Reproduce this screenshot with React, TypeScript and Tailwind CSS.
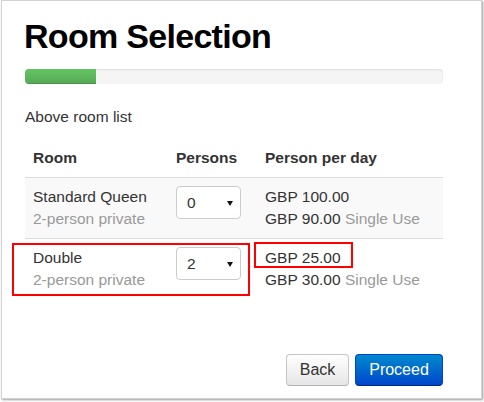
import { useState } from "react";

type Room = {
  name: string;
  kind: string;
  persons: number;
  price: string;
  single: string;
};

const rooms: Room[] = [
  { name: "Standard Queen", kind: "2-person private", persons: 0, price: "GBP 100.00", single: "GBP 90.00" },
  { name: "Double", kind: "2-person private", persons: 2, price: "GBP 25.00", single: "GBP 30.00" },
];

function FakeSelect({ value }: { value: number }) {
  return (
    <div className="w-[65px] h-[33px] border border-[#cccccc] rounded-[4px] bg-white flex items-center justify-between pl-[10px] pr-[7px] text-[15.5px] leading-[22px] text-[#333]">
      <span>{value}</span>
      <svg width="6" height="5" viewBox="0 0 6 5" className="mt-[1px]">
        <path d="M0 0 L6 0 L3 5 Z" fill="#111" />
      </svg>
    </div>
  );
}

export default function App() {
  const [progress] = useState(71);

  return (
    <div className="w-[484px] h-[402px] bg-white relative font-['Liberation_Sans',Arial,sans-serif] text-[#333]">
      <div className="ml-[1px] w-[481px] h-[399px] box-border border border-[#d2d2d2] shadow-[1px_1px_2px_rgba(0,0,0,0.4)] flex flex-col pl-[23px] pr-[38px] pt-[15px]">
        <h1 className="text-[34px] font-bold leading-[40px] tracking-[-0.7px] text-black -ml-[1px]">Room Selection</h1>

        <div className="mt-[13px] h-[15px] rounded-[4px] bg-[#f5f5f5] shadow-[inset_0_1px_2px_rgba(0,0,0,0.1)] overflow-hidden">
          <div
            className="h-full bg-gradient-to-b from-[#62c462] to-[#57a957] shadow-[inset_0_-1px_0_rgba(0,0,0,0.15)]"
            style={{ width: progress }}
          />
        </div>

        <p className="mt-[22px] text-[15.5px] leading-[22px]">Above room list</p>

        <div className="mt-[11px] text-[15.5px] leading-[22px]">
          <div className="grid grid-cols-[143px_89px_186px] border-b border-[#dddddd] font-bold">
            <div className="p-[8px]">Room</div>
            <div className="p-[8px]">Persons</div>
            <div className="p-[8px]">Person per day</div>
          </div>
          {rooms.map((r, i) => (
            <div
              key={r.name}
              className={`grid grid-cols-[143px_89px_186px] ${i === 0 ? "bg-[#f9f9f9] border-b border-[#dddddd]" : ""}`}
            >
              <div className="px-[8px] pt-[8px] pb-[8px]">
                <div>{r.name}</div>
                <div className="text-[#999]">{r.kind}</div>
              </div>
              <div className="px-[8px] pt-[8px]">
                <FakeSelect value={r.persons} />
              </div>
              <div className="px-[8px] pt-[8px]">
                <div>{r.price}</div>
                <div>
                  {r.single} <span className="text-[#999]">Single Use</span>
                </div>
              </div>
            </div>
          ))}
        </div>

        <div className="mt-[55px] flex justify-end gap-[6px]">
          <button className="w-[63px] h-[32px] rounded-[4px] border border-[#c5c5c5] border-b-[#b3b3b3] bg-gradient-to-b from-white to-[#e6e6e6] text-[16px] leading-[22px] text-[#333]">
            Back
          </button>
          <button className="w-[88px] h-[32px] rounded-[4px] border border-[#0044cc] border-b-[#002a80] bg-gradient-to-b from-[#0088cc] to-[#0044cc] text-[16px] leading-[22px] text-white">
            Proceed
          </button>
        </div>
      </div>

      <div className="absolute left-[12px] top-[243px] w-[238px] h-[53px] border-2 border-[#ff0000]" />
      <div className="absolute left-[254px] top-[242px] w-[99px] h-[26px] border-2 border-[#ff0000]" />
    </div>
  );
}
